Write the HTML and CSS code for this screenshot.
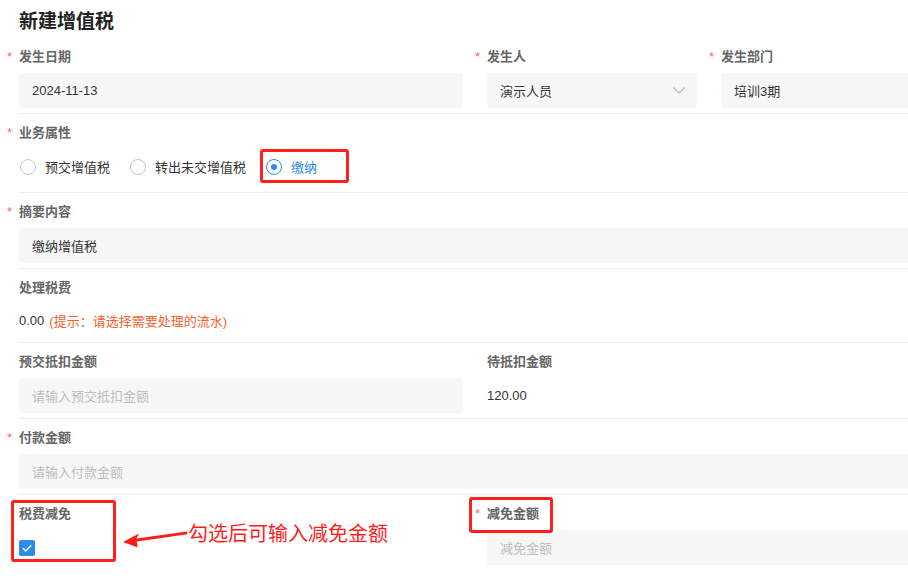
FILE: index.html
```html
<!DOCTYPE html>
<html lang="zh-CN">
<head>
<meta charset="utf-8">
<title>新建增值税</title>
<link rel="stylesheet" href="styles.css">
</head>
<body>
<div class="viewport">
  <div class="page">
    <h1 class="title">新建增值税</h1>

    <div class="row">
      <div class="cell">
        <div class="label req">发生日期</div>
        <div class="input">2024-11-13</div>
      </div>
      <div class="cell">
        <div class="label req">发生人</div>
        <div class="input select">
          <span>演示人员</span>
          <svg class="chev" width="12" height="7" viewBox="0 0 12 7"><path d="M0.5 0.5 L6 6 L11.5 0.5" fill="none" stroke="#b4b4b4" stroke-width="1.1"/></svg>
        </div>
      </div>
      <div class="cell">
        <div class="label req">发生部门</div>
        <div class="input">培训3期</div>
      </div>
    </div>

    <div class="row row-radio">
      <div class="cell full">
        <div class="label req">业务属性</div>
        <div class="radios">
          <label class="radio"><span class="dot"></span><span>预交增值税</span></label>
          <label class="radio"><span class="dot"></span><span>转出未交增值税</span></label>
          <label class="radio on"><span class="dot"></span><span>缴纳</span></label>
        </div>
      </div>
    </div>

    <div class="row">
      <div class="cell full">
        <div class="label req">摘要内容</div>
        <div class="input">缴纳增值税</div>
      </div>
    </div>

    <div class="row">
      <div class="cell full">
        <div class="label">处理税费</div>
        <div class="text text-short"><span>0.00</span><span class="hint">(提示：请选择需要处理的流水)</span></div>
      </div>
    </div>

    <div class="row">
      <div class="cell">
        <div class="label">预交抵扣金额</div>
        <div class="input ph">请输入预交抵扣金额</div>
      </div>
      <div class="cell">
        <div class="label">待抵扣金额</div>
        <div class="text">120.00</div>
      </div>
    </div>

    <div class="row">
      <div class="cell full">
        <div class="label req">付款金额</div>
        <div class="input ph">请输入付款金额</div>
      </div>
    </div>

    <div class="row last">
      <div class="cell">
        <div class="label">税费减免</div>
        <div class="text">
          <span class="check"><svg width="16" height="16" viewBox="0 0 16 16"><path d="M4 8.2 L6.8 11 L12.2 5.2" fill="none" stroke="#fff" stroke-width="1.4"/></svg></span>
        </div>
      </div>
      <div class="cell span2">
        <div class="label req">减免金额</div>
        <div class="input ph">减免金额</div>
      </div>
    </div>

    <div class="mark mark-radio"></div>
    <div class="mark mark-check"></div>
    <div class="mark mark-amount"></div>
    <svg class="arrow" width="70" height="24" viewBox="120 528 70 24">
      <polygon points="123,542 139,533.5 136.5,538.6 187,531.6 187.4,534.2 137,541.6 137.5,547.5" fill="#ff1e1e"/>
    </svg>
    <div class="note">勾选后可输入减免金额</div>
  </div>
</div>
</body>
</html>
```
FILE: styles.css
```css
html, body {
  margin: 0;
  padding: 0;
  background: #fff;
  overflow: hidden;
}

.viewport {
  width: 908px;
  height: 583px;
  overflow: hidden;
}

.page {
  position: relative;
  width: 936px;
  font-family: "Liberation Sans", "Noto Sans CJK SC", sans-serif;
  font-size: 13px;
  color: #333;
}

.title {
  margin: 0;
  padding: 7px 19px 5px;
  font-size: 19px;
  line-height: 26px;
  font-weight: 700;
  color: #222;
  font-family: "Noto Sans CJK SC", sans-serif;
}

.row {
  display: grid;
  grid-template-columns: 449px 234px 234px;
  margin-left: 19px;
  padding: 6px 0 5px;
  border-bottom: 1px solid #efefef;
}

.row.last {
  border-bottom: none;
}

.row-radio {
  padding-bottom: 8px;
}

.cell {
  padding-right: 5px;
  min-width: 0;
}

.cell + .cell {
  padding-left: 19px;
}

.cell.full {
  grid-column: 1 / -1;
}

.cell.span2 {
  grid-column: 2 / 4;
}

.label {
  height: 24px;
  line-height: 24px;
  margin-bottom: 5px;
  color: #666;
  font-weight: 600;
  font-family: "Noto Sans CJK SC", sans-serif;
  white-space: nowrap;
}

.label.req::before {
  content: "*";
  display: inline-block;
  width: 12px;
  margin-left: -12px;
  color: #f56c6c;
  font-family: "Liberation Sans", sans-serif;
  font-weight: 400;
  font-size: 13px;
}

.input {
  height: 35px;
  box-sizing: border-box;
  padding: 0 13px;
  background: #f7f7f7;
  border-radius: 4px;
  display: flex;
  align-items: center;
  color: #333;
  white-space: nowrap;
}

.input.ph {
  color: #bdbdbd;
}

.input.select {
  justify-content: space-between;
  padding-right: 12px;
}

.text {
  height: 35px;
  display: flex;
  align-items: center;
  white-space: nowrap;
  color: #333;
}

.text-short {
  height: 33px;
}

.hint {
  color: #f5622d;
  margin-left: 5px;
}

.radios {
  height: 35px;
  display: flex;
  align-items: center;
  gap: 20px;
  padding-left: 1px;
}

.radio {
  display: flex;
  align-items: center;
  gap: 9px;
  color: #333;
}

.radio .dot {
  width: 16px;
  height: 16px;
  box-sizing: border-box;
  border: 1px solid #c6c6c6;
  border-radius: 50%;
  display: flex;
  align-items: center;
  justify-content: center;
}

.radio.on {
  color: #2b8cec;
}

.radio.on .dot {
  border-color: #2b8cec;
}

.radio.on .dot::after {
  content: "";
  width: 6px;
  height: 6px;
  border-radius: 50%;
  background: #2b8cec;
}

.check {
  width: 16px;
  height: 16px;
  border-radius: 2px;
  background: #2b8cec;
  display: block;
}

.check svg {
  display: block;
}

.mark {
  position: absolute;
  box-sizing: border-box;
  border: 3px solid #ff1f1f;
  border-radius: 3px;
}

.mark-radio {
  left: 260px;
  top: 149px;
  width: 89px;
  height: 34px;
}

.mark-check {
  left: 11px;
  top: 500px;
  width: 105px;
  height: 62px;
}

.mark-amount {
  left: 469px;
  top: 497px;
  width: 84px;
  height: 36px;
}

.arrow {
  position: absolute;
  left: 120px;
  top: 528px;
}

.note {
  position: absolute;
  left: 188px;
  top: 520px;
  font-family: "Noto Sans CJK SC", sans-serif;
  font-size: 20px;
  line-height: 26px;
  color: #ff1e1e;
  white-space: nowrap;
}
```
